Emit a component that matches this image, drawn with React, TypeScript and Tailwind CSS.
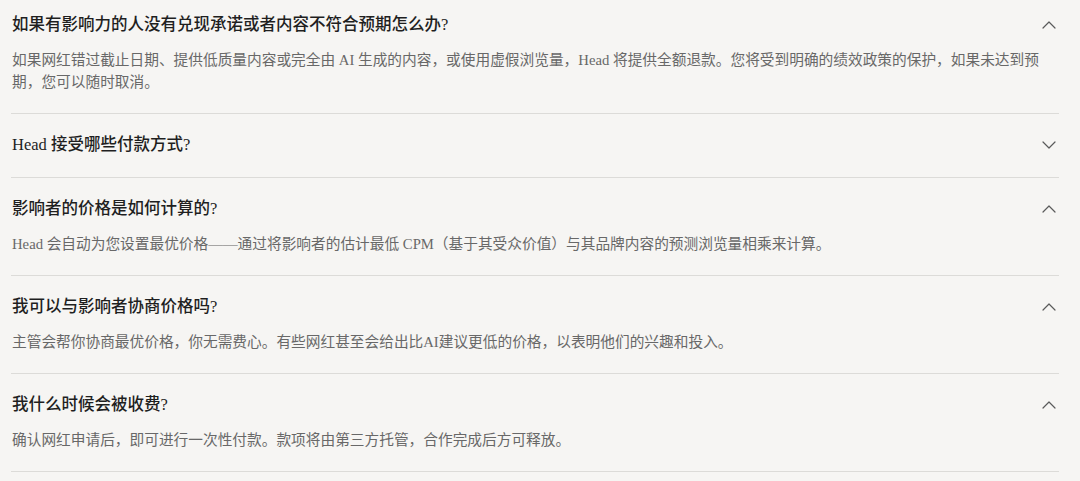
import { useState } from 'react';

type Faq = {
  q: string;
  a?: string;
};

const faqs: Faq[] = [
  {
    q: '如果有影响力的人没有兑现承诺或者内容不符合预期怎么办?',
    a: '如果网红错过截止日期、提供低质量内容或完全由 AI 生成的内容，或使用虚假浏览量，Head 将提供全额退款。您将受到明确的绩效政策的保护，如果未达到预期，您可以随时取消。',
  },
  { q: 'Head 接受哪些付款方式?' },
  {
    q: '影响者的价格是如何计算的?',
    a: 'Head 会自动为您设置最优价格——通过将影响者的估计最低 CPM（基于其受众价值）与其品牌内容的预测浏览量相乘来计算。',
  },
  {
    q: '我可以与影响者协商价格吗?',
    a: '主管会帮你协商最优价格，你无需费心。有些网红甚至会给出比AI建议更低的价格，以表明他们的兴趣和投入。',
  },
  {
    q: '我什么时候会被收费?',
    a: '确认网红申请后，即可进行一次性付款。款项将由第三方托管，合作完成后方可释放。',
  },
];

function Chevron({ up }: { up: boolean }) {
  return (
    <svg width="14" height="8" viewBox="0 0 14 8" fill="none" className="text-[#5a5a5a]">
      <polyline
        points={up ? '1,7 7,1 13,7' : '1,1 7,7 13,1'}
        stroke="currentColor"
        strokeWidth="1.2"
        strokeLinecap="round"
        strokeLinejoin="round"
      />
    </svg>
  );
}

export default function App() {
  const [open, setOpen] = useState<boolean[]>([true, false, true, true, true]);

  const toggle = (i: number) =>
    setOpen((prev) => prev.map((v, j) => (j === i ? !v : v)));

  return (
    <div
      className="min-h-screen w-full bg-[#f6f5f3] pl-[11px] pr-[21px]"
      style={{ fontFamily: '"Liberation Serif", "Noto Sans CJK SC", serif' }}
    >
      {faqs.map((f, i) => (
        <div
          key={f.q}
          className={`border-b border-[#dcdbd8] ${i === 0 ? 'pt-[13px]' : 'pt-[19px]'}`}
        >
          <button
            onClick={() => f.a && toggle(i)}
            className="flex h-6 w-full items-center justify-between pl-px pr-[3px] text-left"
          >
            <span className="text-[16.5px] font-medium text-[#1f1f1f]">{f.q}</span>
            <Chevron up={!!f.a && open[i]} />
          </button>
          {f.a && open[i] ? (
            <p className="mt-[12px] pb-5 pl-px pr-2 text-[14.7px] leading-[22px] text-[#686868]">
              {f.a}
            </p>
          ) : (
            <div className="pb-5" />
          )}
        </div>
      ))}
    </div>
  );
}
